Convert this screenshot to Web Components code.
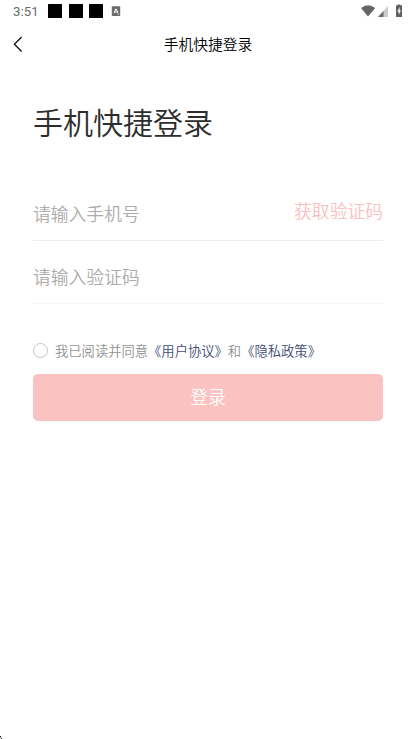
<!DOCTYPE html>
<html lang="zh-CN">
<head>
<meta charset="utf-8">
<title>手机快捷登录</title>
<style>
html,body{margin:0;background:#fff;height:739px;overflow:hidden}
body{font-family:"Noto Sans CJK SC",sans-serif;font-weight:350;color:#333}
</style>
</head>
<body>
<login-screen></login-screen>
<script>
const define = (name, html) => {
  const t = document.createElement('template');
  t.innerHTML = html.trim();
  customElements.define(name, class extends HTMLElement {
    constructor() {
      super();
      this.attachShadow({mode: 'open'}).append(t.content.cloneNode(true));
    }
  });
};

define('status-bar', `
<style>
:host{display:flex;height:22px;box-sizing:border-box;padding:0 13px;align-items:flex-start}
.time{font:13.2px/15px Roboto,sans-serif;color:#6b6b6b;width:35px;padding-top:4px;letter-spacing:.1px}
.blocks{display:flex;gap:6.5px;padding-top:4px}
.blocks i{width:14px;height:14px;background:#000;border-radius:.5px}
.app{margin:6px 0 0 8px}
.right{margin-left:auto;display:flex}
svg{display:block}
</style>
<span class="time">3:51</span>
<span class="blocks"><i></i><i></i><i></i></span>
<svg class="app" width="10" height="11" viewBox="0 0 10 11"><rect x=".8" y=".2" width="8.4" height="9.9" rx="1" fill="#6b6b6b"/><path d="M3 7.3 4.7 3h.6L7 7.3M3.6 5.9h2.8" fill="none" stroke="#fff" stroke-width="1"/><path d="M6.7 8.2h1.3" stroke="#fff" stroke-width=".7"/></svg>
<span class="right">
<svg width="44" height="20" viewBox="0 0 44 20"><path d="M2 8.1Q9 2.3 16.2 8.1L9 16.5Z" fill="#646464"/><path d="M29 6v11H19Z" fill="#cbcbcb"/><path d="M24.5 11v6H19Z" fill="#6b6b6b"/><path d="M37.5 5.2h1.2v-.7h2.6v.7h1.2q.5 0 .5.5v10.8q0 .5-.5.5h-5q-.5 0-.5-.5V5.7q0-.5.5-.5Z" fill="#616161"/><path d="M40.7 7 38.3 11.5h1.4v3.3l2.2-4.4h-1.3Z" fill="#fff"/></svg>
</span>`);

define('nav-bar', `
<style>
:host{display:grid;grid-template-columns:60px 1fr 60px;height:44px;align-items:center}
svg{display:block;margin-left:11px}
div{text-align:center;font-size:14.75px;line-height:22px;color:#000}
</style>
<svg width="14" height="18" viewBox="0 0 14 18"><path d="M10.6 2 3.4 9.3l7.2 7.2" fill="none" stroke="#111" stroke-width="1.3"/></svg>
<div><slot></slot></div>`);

define('form-field', `
<style>
:host{display:flex;box-sizing:border-box;height:63px;border-bottom:1px solid var(--line,#eee);padding-top:var(--top,23px);align-items:flex-start;justify-content:space-between;font-size:17.8px;line-height:26px;color:#acacac}
::slotted([slot=action]){color:#f9c0bf;margin-top:-3px}
</style>
<span><slot></slot></span><slot name="action"></slot>`);

define('agree-row', `
<style>
:host{display:flex;align-items:center;height:20px;font-size:13.3px;line-height:20px;color:#929292;white-space:nowrap}
i{width:13px;height:13px;border:1px solid #c4c4c4;border-radius:50%;margin:-2px 7px 0 0}
</style>
<i></i><span><slot></slot></span>`);

define('doc-link', `<style>:host{display:inline;color:#3e4d76}</style><slot></slot>`);

define('primary-button', `
<style>
:host{display:flex;height:47px;box-sizing:border-box;padding-bottom:4px;align-items:center;justify-content:center;background:#fac2c1;border-radius:5px;color:#fff;font-size:17.8px;line-height:26px}
</style>
<slot></slot>`);

define('login-screen', `
<style>
:host{display:flex;flex-direction:column;width:416px;height:739px;position:relative}
main{padding:0 33px;display:flex;flex-direction:column}
h1{margin:33px 0 0;font-weight:inherit;font-size:30px;line-height:44px;color:#2d2d2d}
.fields{margin-top:34px}
agree-row{margin-top:37px}
primary-button{margin-top:13px}
.corner{position:absolute;left:0;bottom:0;display:block}
</style>
<status-bar></status-bar>
<nav-bar>手机快捷登录</nav-bar>
<main>
<h1>手机快捷登录</h1>
<div class="fields">
<form-field style="height:64px">请输入手机号<span slot="action">获取验证码</span></form-field>
<form-field style="--line:#f6f6f6;--top:22px">请输入验证码</form-field>
</div>
<agree-row>我已阅读并同意<doc-link>《用户协议》</doc-link>和<doc-link>《隐私政策》</doc-link></agree-row>
<primary-button>登录</primary-button>
</main>
<svg class="corner" width="3" height="3" viewBox="0 0 3 3"><path d="M0 0h1v1H0zM1 2h1v1H1z" fill="#111"/><path d="M0 1h1v1H0z" fill="#999"/></svg>`);
</script>
</body>
</html>
